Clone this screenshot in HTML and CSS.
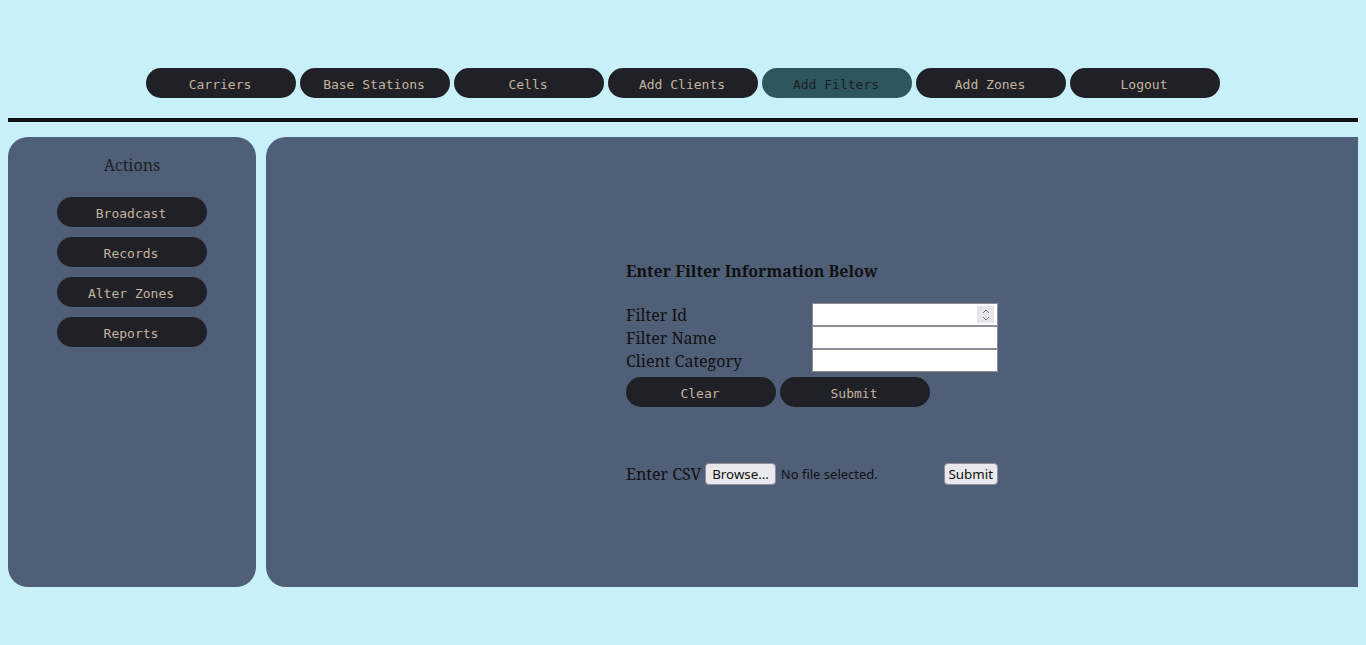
FILE: index.html
```html
<!DOCTYPE html>
<html>
<head>
<meta charset="utf-8">
<link rel="stylesheet" href="styles.css">
</head>
<body>
<header class="top">
  <nav class="nav">
    <button class="pill">Carriers</button>
    <button class="pill">Base Stations</button>
    <button class="pill">Cells</button>
    <button class="pill">Add Clients</button>
    <button class="pill active">Add Filters</button>
    <button class="pill">Add Zones</button>
    <button class="pill">Logout</button>
  </nav>
</header>
<div class="rule"></div>
<div class="panels">
  <aside class="side">
    <h3 class="side-title">Actions</h3>
    <div class="side-list">
      <button class="pill">Broadcast</button>
      <button class="pill">Records</button>
      <button class="pill">Alter Zones</button>
      <button class="pill">Reports</button>
    </div>
  </aside>
  <main class="main">
    <div class="form">
      <h4 class="form-title">Enter Filter Information Below</h4>
      <div class="rows">
        <div class="row"><label>Filter Id</label><div class="field num"><span class="spin"><svg width="8" height="14" viewBox="0 0 8 14"><path d="M1 5 L4 2 L7 5 M1 9 L4 12 L7 9" fill="none" stroke="#777" stroke-width="1"/></svg></span></div></div>
        <div class="row"><label>Filter Name</label><div class="field"></div></div>
        <div class="row"><label>Client Category</label><div class="field"></div></div>
      </div>
      <div class="actions">
        <button class="pill">Clear</button>
        <button class="pill">Submit</button>
      </div>
      <div class="csv">
        <span class="csv-label">Enter CSV</span>
        <button class="native browse">Browse…</button>
        <span class="nofile">No file selected.</span>
        <button class="native submit">Submit</button>
      </div>
    </div>
  </main>
</div>
</body>
</html>
```
FILE: styles.css
```css
html, body {
  background: #c8f0f8;
}
body {
  margin: 8px;
  font-family: "Noto Serif", "DejaVu Serif", serif;
  color: #111;
}
.top {
  padding-top: 60px;
}
.nav {
  display: flex;
  justify-content: center;
  gap: 4px;
}
.pill {
  width: 150px;
  height: 30px;
  border: none;
  border-radius: 15px;
  background: #202127;
  color: #c4b39f;
  font-family: "DejaVu Sans Mono", monospace;
  font-size: 13px;
  padding: 2px 2px 0 0;
  margin: 0;
  line-height: 30px;
}
.pill.active {
  background: #2d565e;
  color: #1b1d22;
}
.rule {
  height: 4px;
  background: #111;
  margin-top: 20px;
}
.panels {
  display: flex;
  gap: 10px;
  margin-top: 15px;
  height: 450px;
}
.side {
  width: 248px;
  background: #505f78;
  border-radius: 20px;
  display: flex;
  flex-direction: column;
  align-items: center;
}
.side-title {
  margin: 16px 0 0;
  font-size: 16px;
  font-weight: normal;
  color: #1e1f24;
  line-height: 24px;
}
.side-list {
  margin-top: 20px;
  display: flex;
  flex-direction: column;
  gap: 10px;
}
.main {
  flex: 1;
  background: #505f78;
  border-radius: 20px 0 0 20px;
  display: flex;
  justify-content: center;
}
.form {
  width: 372px;
  margin-top: 124px;
}
.form-title {
  margin: 0;
  font-size: 16px;
  font-weight: bold;
  line-height: 20px;
  color: #111;
}
.rows {
  margin-top: 22px;
}
.row {
  display: flex;
  height: 23px;
  align-items: center;
}
.row label {
  width: 186px;
  font-size: 16px;
  line-height: 23px;
  padding-top: 1px;
}
.field {
  box-sizing: content-box;
  width: 184px;
  height: 21px;
  background: #fff;
  border: 1px solid #8f8b97;
}
.field.num {
  display: flex;
  justify-content: flex-end;
  align-items: center;
}
.spin {
  width: 17px;
  height: 17px;
  margin-right: 3px;
  background: #e6e6ea;
  display: flex;
  align-items: center;
  justify-content: center;
}
.actions {
  display: flex;
  gap: 4px;
  margin-top: 5px;
}
.csv {
  display: flex;
  align-items: center;
  margin-top: 56px;
  height: 22px;
}
.csv-label {
  font-size: 16px;
  margin-right: 4px;
}
.native {
  font-family: "Noto Sans", "DejaVu Sans", sans-serif;
  font-size: 13.333px;
  height: 22px;
  background: #e9e9ed;
  border: 1px solid #8f8f9d;
  border-radius: 4px;
  color: #111;
  line-height: 20px;
}
.browse {
  padding: 0 6px;
}
.nofile {
  font-family: "Noto Sans", "DejaVu Sans", sans-serif;
  font-size: 13px;
  margin-left: 5px;
  color: #111;
}
.submit {
  margin-left: auto;
  padding: 0 4px;
}
```
